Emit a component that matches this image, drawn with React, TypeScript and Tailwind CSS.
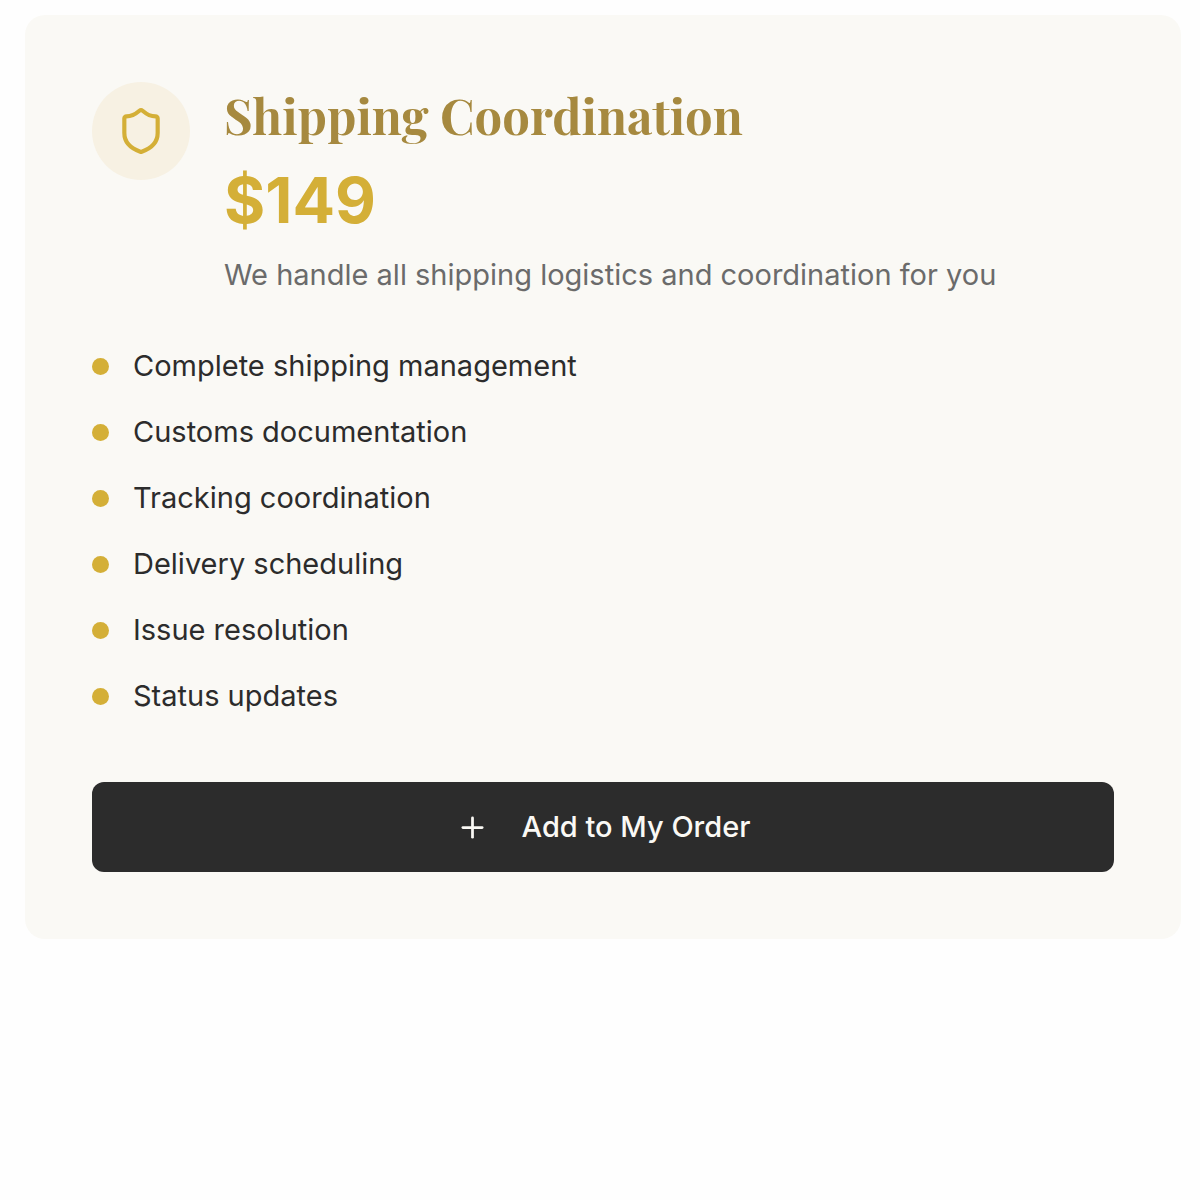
import { Plus, Shield } from "lucide-react";

const features = [
  "Complete shipping management",
  "Customs documentation",
  "Tracking coordination",
  "Delivery scheduling",
  "Issue resolution",
  "Status updates",
];

interface ServiceCardProps {
  title: string;
  price: string;
  description: string;
  items: string[];
}

function ServiceCard({ title, price, description, items }: ServiceCardProps) {
  return (
    <section className="rounded-[20px] bg-[#faf9f5] px-[67px] py-[67px]">
      <div className="flex items-start gap-[34px]">
        <div className="flex size-[98px] shrink-0 items-center justify-center rounded-full bg-[#f7f1e3]">
          <Shield className="size-[50px] text-[#d4af37]" strokeWidth={2} />
        </div>
        <div>
          <h3 className="font-['Playfair_Display','Liberation_Serif',serif] text-[49px] leading-[66px] font-bold text-[#a6893f]">
            {title}
          </h3>
          <p className="mt-[12px] text-[63px] leading-[80px] font-bold text-[#d4af37]">
            {price}
          </p>
          <p className="mt-[14px] text-[29px] leading-[42px] text-[#6b6b6b]">
            {description}
          </p>
        </div>
      </div>

      <ul className="mt-[49px] flex flex-col gap-6">
        {items.map((item) => (
          <li
            key={item}
            className="flex items-center gap-6 text-[29px] leading-[42px] text-[#2c2c2c]"
          >
            <span className="size-[17px] shrink-0 rounded-full bg-[#d4af37]" />
            {item}
          </li>
        ))}
      </ul>

      <button
        type="button"
        className="mt-[65px] flex h-[90px] w-full items-center justify-center gap-[33px] rounded-xl bg-[#2c2c2c] text-[29px] font-medium text-[#faf9f5]"
      >
        <Plus className="size-[33px]" strokeWidth={2} />
        Add to My Order
      </button>
    </section>
  );
}

export default function App() {
  return (
    <main className="min-h-screen bg-[#fefefe] pt-[15px] pr-[19px] pl-[25px] font-['Inter',sans-serif]">
      <ServiceCard
        title="Shipping Coordination"
        price="$149"
        description="We handle all shipping logistics and coordination for you"
        items={features}
      />
    </main>
  );
}
